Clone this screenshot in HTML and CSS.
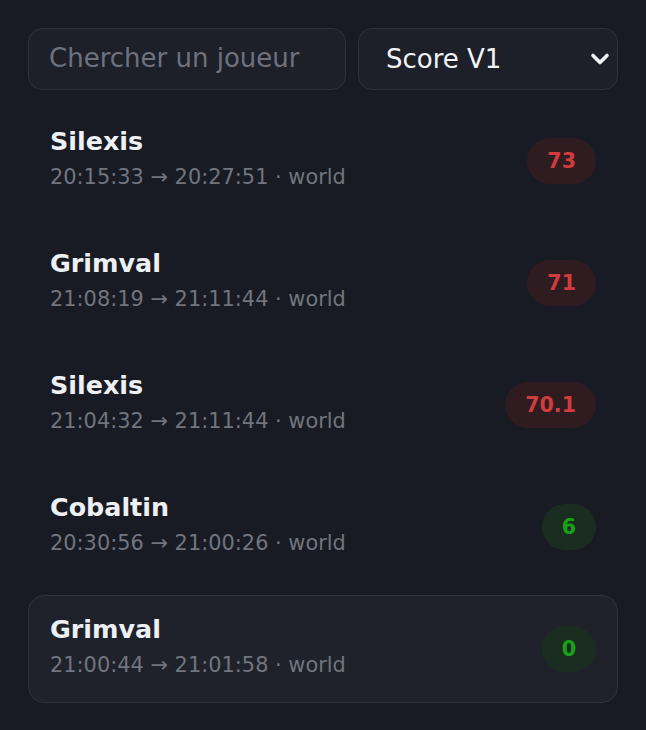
FILE: index.html
```html
<!DOCTYPE html>
<html lang="fr">
<head>
<meta charset="utf-8">
<title>Sessions</title>
<link rel="stylesheet" href="styles.css">
</head>
<body>
<main class="page">
  <div class="controls">
    <input class="search" type="text" placeholder="Chercher un joueur">
    <div class="select-wrap">
      <select class="select">
        <option>Score V1</option>
        <option>Score V2</option>
      </select>
      <svg class="chevron" width="20" height="14" viewBox="0 0 20 14" aria-hidden="true">
        <polyline points="3,3.5 10,10.5 17,3.5" fill="none" stroke="#f1f3f6" stroke-width="3.6" stroke-linecap="round" stroke-linejoin="round"/>
      </svg>
    </div>
  </div>
  <ul class="list">
    <li class="row">
      <div class="info"><div class="name">Silexis</div><div class="meta">20:15:33 → 20:27:51 · world</div></div>
      <span class="badge bad">73</span>
    </li>
    <li class="row">
      <div class="info"><div class="name">Grimval</div><div class="meta">21:08:19 → 21:11:44 · world</div></div>
      <span class="badge bad">71</span>
    </li>
    <li class="row">
      <div class="info"><div class="name">Silexis</div><div class="meta">21:04:32 → 21:11:44 · world</div></div>
      <span class="badge bad">70.1</span>
    </li>
    <li class="row">
      <div class="info"><div class="name">Cobaltin</div><div class="meta">20:30:56 → 21:00:26 · world</div></div>
      <span class="badge good">6</span>
    </li>
    <li class="row active">
      <div class="info"><div class="name">Grimval</div><div class="meta">21:00:44 → 21:01:58 · world</div></div>
      <span class="badge good">0</span>
    </li>
  </ul>
</main>
</body>
</html>
```
FILE: styles.css
```css
* { box-sizing: border-box; }
html, body {
  margin: 0;
  background: #181b23;
  font-family: "DejaVu Sans", Verdana, sans-serif;
  color: #eef0f4;
}
.page {
  padding: 28px 28px;
}
.controls {
  display: flex;
  gap: 12px;
}
.search {
  flex: 1;
  min-width: 0;
  height: 62px;
  padding: 0 20px 3px;
  background: #1d2029;
  border: 1px solid #2d313b;
  border-radius: 14px;
  color: #eef0f4;
  font-family: inherit;
  font-size: 26px;
  outline: none;
}
.search::placeholder {
  color: #6d727e;
}
.select-wrap {
  position: relative;
  width: 260px;
  flex: none;
}
.select {
  appearance: none;
  -webkit-appearance: none;
  width: 100%;
  height: 62px;
  padding: 0 40px 0 27px;
  background: #1d2029;
  border: 1px solid #2d313b;
  border-radius: 14px;
  color: #f1f3f6;
  font-family: inherit;
  font-size: 26px;
  outline: none;
}
.chevron {
  position: absolute;
  right: 8px;
  top: 24px;
  pointer-events: none;
}
.list {
  list-style: none;
  margin: 17px 0 0;
  padding: 0;
  display: flex;
  flex-direction: column;
  gap: 14px;
}
.row {
  display: flex;
  align-items: center;
  justify-content: space-between;
  height: 108px;
  padding: 16px 21px 22px;
  border: 1px solid transparent;
  border-radius: 16px;
}
.row.active {
  background: #1f222b;
  border-color: #2e323c;
}
.info {
  display: flex;
  flex-direction: column;
}
.name {
  font-size: 25.4px;
  font-weight: bold;
  line-height: 36px;
  color: #eef0f4;
}
.meta {
  margin-top: 2px;
  font-size: 20.9px;
  line-height: 32px;
  color: #70757f;
}
.badge {
  margin-top: 6px;
  font-size: 20.6px;
  font-weight: bold;
  line-height: 26px;
  padding: 10px 20px;
  border-radius: 23px;
}
.badge.bad {
  color: #d23b3e;
  background: #2e1c21;
}
.badge.good {
  color: #17a317;
  background: #1b2c20;
}
```
